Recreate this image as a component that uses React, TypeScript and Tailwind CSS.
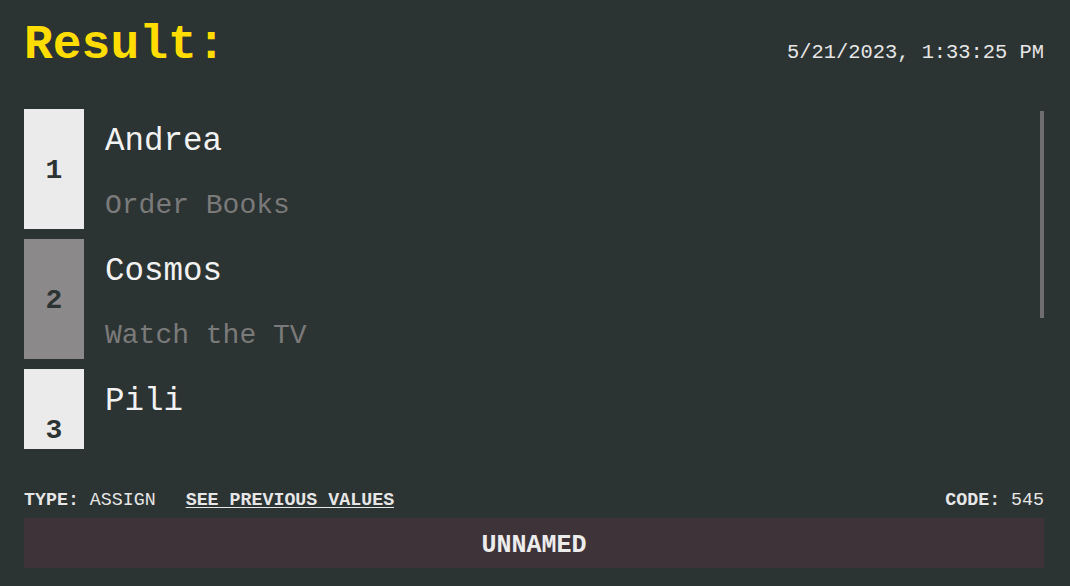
import React from 'react';

// task assignments shown in the result list
const assignments = [
  { id: 1, name: 'Andrea', task: 'Order Books', active: false },
  { id: 2, name: 'Cosmos', task: 'Watch the TV', active: true },
  { id: 3, name: 'Pili', task: 'Clean the Kitchen', active: false },
];

const mono = { fontFamily: '"Liberation Mono", "DejaVu Sans Mono", monospace' };

const App = () => {
  return (
    <div
      className="h-[586px] w-full bg-[#2c3333] pl-6 pr-[26px] flex flex-col overflow-hidden"
      style={mono}
    >
      <header className="flex items-baseline justify-between pt-[16px]">
        <h1 className="text-[48px] leading-[58px] font-bold text-[#ffdd00]">Result:</h1>
        <span className="text-[20.4px] text-[#e6e6e6]">5/21/2023, 1:33:25 PM</span>
      </header>

      <div className="relative mt-[35px] h-[340px] shrink-0">
        <div className="h-full overflow-hidden flex flex-col gap-[10px]">
          {assignments.map((a) => (
            <div key={a.id} className="flex h-[120px] shrink-0">
              <div
                className={`w-[60px] shrink-0 flex items-center justify-center pt-[4px] text-[28px] font-bold text-[#2c3333] ${
                  a.active ? 'bg-[#8b8989]' : 'bg-[#ebebeb]'
                }`}
              >
                {a.id}
              </div>
              <div className="pl-[21px] flex flex-col">
                <span className="text-[32.5px] leading-[60px] pt-[3px] text-[#f2f2f2]">{a.name}</span>
                <span className="text-[28px] leading-[60px] pt-[4px] text-[#7a7a7a]">{a.task}</span>
              </div>
            </div>
          ))}
        </div>
        {/* scroll thumb */}
        <div className="absolute right-0 top-[2px] h-[207px] w-[4px] bg-[#6e6e6e]" />
      </div>

      <div className="mt-[39px] flex items-center justify-between text-[18.3px] leading-[24px] text-[#e6e6e6]">
        <div className="flex items-center gap-[30px]">
          <span>
            <b>TYPE:</b> ASSIGN
          </span>
          <a href="#" className="font-bold underline underline-offset-2">
            SEE PREVIOUS VALUES
          </a>
        </div>
        <span>
          <b>CODE:</b> 545
        </span>
      </div>

      <button className="mt-[6px] h-[50px] w-full shrink-0 bg-[#3d3339] pt-[5px] text-[25px] font-bold text-[#ececec]">
        UNNAMED
      </button>
    </div>
  );
};

export default App;
